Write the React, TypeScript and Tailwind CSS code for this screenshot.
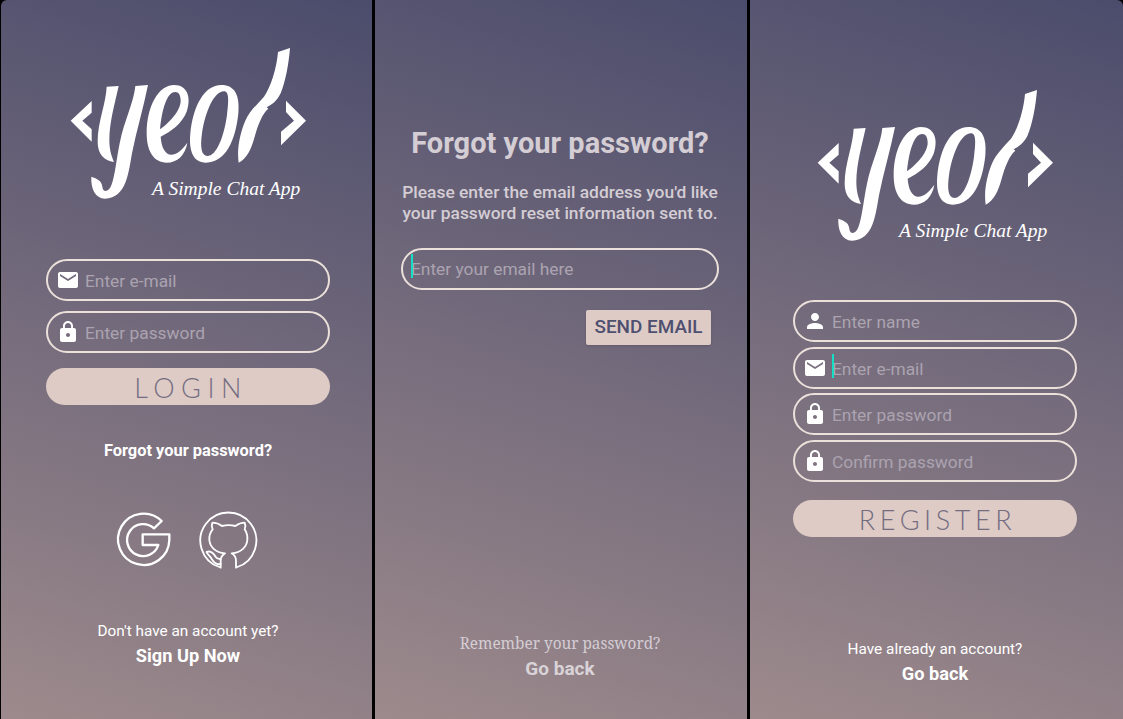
import { MdEmail, MdLock, MdPerson } from "react-icons/md";

const panelClass =
  "flex h-[719px] flex-col items-center bg-[linear-gradient(197deg,#4b4c6c_0%,#9d8a8c_100%)] font-['Roboto',sans-serif]";

const Logo = () => (
  <div className="relative h-[190px] w-[280px]">
    <svg viewBox="0 0 840 570" className="h-[190px] w-[280px]" fill="#fff">
      {/* brackets */}
      <path d="M125 213 L62 272 L125 335 L125 298 L97 272 L125 248 Z" />
      <path d="M708 212 L768 272 L693 346 L693 305 L732 272 L708 246 Z" />
      {/* y */}
      <path d="M170 170 L206 168 C196 215 178 275 178 330 C178 362 186 382 192 396 C162 392 143 372 143 335 C143 275 168 220 170 170 Z" />
      <path d="M256 168 L294 165 C280 235 260 300 246 370 C236 425 230 505 165 506 C135 505 122 475 124 440 C138 445 155 450 157 470 C158 487 176 488 184 466 C196 435 200 380 210 335 C222 275 252 215 256 168 Z" />
      {/* e */}
      <path
        fillRule="evenodd"
        d="M372 165 C414 165 424 205 410 245 C396 280 364 304 332 320 C334 352 346 374 364 374 C382 374 397 358 412 338 C406 375 382 398 350 398 C312 398 290 365 290 310 C290 230 325 165 372 165 Z M376 186 C350 186 336 240 330 298 C358 278 392 242 392 212 C392 196 386 186 376 186 Z"
      />
      {/* o */}
      <path
        fillRule="evenodd"
        d="M514 165 C554 165 570 195 565 250 C557 330 527 398 468 398 C430 398 416 365 421 310 C429 230 462 165 514 165 Z M522 184 C492 184 466 245 456 310 C450 352 454 378 472 378 C500 378 522 320 531 255 C536 215 538 184 522 184 Z"
      />
      {/* r stroke */}
      <path d="M684 66 L720 54 C716 105 706 155 692 190 C682 212 665 225 650 232 L655 236 C637 250 624 285 614 320 C604 358 590 385 566 398 C560 355 570 310 586 272 C598 245 622 222 642 200 C662 172 680 115 684 66 Z" />
    </svg>
    <span className="absolute top-[147px] left-[102px] font-['Liberation_Serif',serif] text-[19.5px] leading-[24px] whitespace-nowrap text-white italic">
      A Simple Chat App
    </span>
  </div>
);

const SocialIcons = () => (
  <svg
    viewBox="0 0 600 240"
    className="h-[80px] w-[200px]"
    fill="none"
    stroke="#fff"
    strokeLinejoin="round"
  >
    {/* google */}
    <path
      strokeWidth="7"
      d="M215 63 A77 77 0 1 0 238 120 L238 103 L158 103 L158 135 L205 135 A48 48 0 1 1 192 85 Z"
    />
    {/* github */}
    <g strokeWidth="5.5" strokeLinecap="round">
      <path d="M388 201 A84 84 0 1 1 442 201" />
      <path d="M392 203 L392 180 C392 172 398 165 405 160 C375 158 360 140 358 120 C357 105 362 95 368 88 C365 80 365 72 368 68 C378 68 388 72 396 78 C408 75 424 75 436 78 C444 72 455 68 464 68 C467 75 467 82 464 88 C470 97 473 108 472 120 C470 140 455 158 425 160 C433 165 438 172 438 182 L438 203" />
      <path d="M350 156 C362 150 372 162 378 172 C382 178 388 176 392 178" />
      <path d="M392 192 C375 197 368 180 360 170 C355 162 350 160 350 156" />
    </g>
  </svg>
);

const Field = ({
  icon,
  text,
  caret,
  className = "w-[284px]",
}: {
  icon?: React.ReactNode;
  text: string;
  caret?: boolean;
  className?: string;
}) => (
  <div
    className={`flex h-[42px] items-center rounded-full border-2 border-[#ebe0da] ${
      icon ? "pl-[6px]" : "pl-[8px]"
    } ${className}`}
  >
    {icon && <span className="flex w-[28px] justify-center text-white">{icon}</span>}
    <span
      className={`relative text-[17.35px] whitespace-nowrap text-[#aba3b0] ${icon ? "top-[1px] ml-[3px]" : ""}`}
    >
      {caret && <span className="absolute top-[-2px] left-0 h-[24px] w-[2px] bg-[#14e0c8]" />}
      {text}
    </span>
  </div>
);

const PillButton = ({ label, className }: { label: string; className: string }) => (
  <div
    className={`flex h-[37px] w-[284px] items-center justify-center rounded-full bg-[#decbc5] pt-[3px] font-['Lato',sans-serif] text-[27px] font-light text-[#746d82] ${className}`}
  >
    {label}
  </div>
);

const LoginPanel = () => (
  <section className={`${panelClass} w-[371px] rounded-tl-[6px] pl-[3px]`}>
    <div className="mt-[30px] ml-[4px]">
      <Logo />
    </div>
    <Field className="mt-[39px] w-[284px]" icon={<MdEmail size={24} />} text="Enter e-mail" />
    <Field className="mt-[10px] w-[284px]" icon={<MdLock size={24} />} text="Enter password" />
    <div className="mt-[15px]">
      <PillButton label="LOGIN" className="pl-[6px] tracking-[0.24em]" />
    </div>
    <p className="mt-[36px] text-[16.4px] leading-[20px] font-bold text-white">Forgot your password?</p>
    <div className="mt-[39px] ml-[4px]">
      <SocialIcons />
    </div>
    <p className="mt-[41px] text-[15.35px] leading-[20px] text-white">Don&apos;t have an account yet?</p>
    <p className="mt-[4px] text-[18.2px] leading-[22px] font-bold text-white">Sign Up Now</p>
  </section>
);

const ForgotPanel = () => (
  <section className={`${panelClass} w-[372px] pr-[2px]`}>
    <h1 className="mt-[125px] text-[29px] leading-[36px] font-bold text-[#d4cdd4]">Forgot your password?</h1>
    <p className="mt-[21px] w-[320px] text-center text-[17.4px] leading-[21px] font-medium text-[#d4cdd4]">
      Please enter the email address you&apos;d like your password reset information sent to.
    </p>
    <Field className="mt-[24px] w-[318px]" text="Enter your email here" caret />
    <div className="mt-[20px] flex w-[318px] justify-end pr-[8px]">
      <div className="flex h-[35px] w-[125px] items-center justify-center rounded-[2px] bg-[#decbc5] text-[18.9px] font-medium text-[#4f4f70] shadow-sm">
        SEND EMAIL
      </div>
    </div>
    <p className="mt-[288px] font-['Noto_Serif','DejaVu_Serif',serif] text-[15.35px] leading-[20px] text-[#d4cdd4]">
      Remember your password?
    </p>
    <p className="mt-[5px] text-[19px] leading-[22px] font-bold text-[#d9d3d8]">Go back</p>
  </section>
);

const RegisterPanel = () => (
  <section className={`${panelClass} w-[373px] rounded-tr-[6px] pr-[3px]`}>
    <div className="mt-[72px] ml-[4px]">
      <Logo />
    </div>
    <Field className="mt-[38px] w-[284px]" icon={<MdPerson size={24} />} text="Enter name" />
    <Field className="mt-[5px] w-[284px]" icon={<MdEmail size={24} />} text="Enter e-mail" caret />
    <Field className="mt-[4px] w-[284px]" icon={<MdLock size={24} />} text="Enter password" />
    <Field className="mt-[5px] w-[284px]" icon={<MdLock size={24} />} text="Confirm password" />
    <div className="mt-[18px]">
      <PillButton label="REGISTER" className="pl-[5px] tracking-[0.17em]" />
    </div>
    <p className="mt-[102px] text-[15.35px] leading-[20px] text-white">Have already an account?</p>
    <p className="mt-[4px] text-[18.2px] leading-[22px] font-bold text-white">Go back</p>
  </section>
);

const App = () => {
  return (
    <main className="flex h-[719px] w-[1123px] gap-[3px] overflow-hidden bg-black pl-[1px]">
      <LoginPanel />
      <ForgotPanel />
      <RegisterPanel />
    </main>
  );
};

export default App;
